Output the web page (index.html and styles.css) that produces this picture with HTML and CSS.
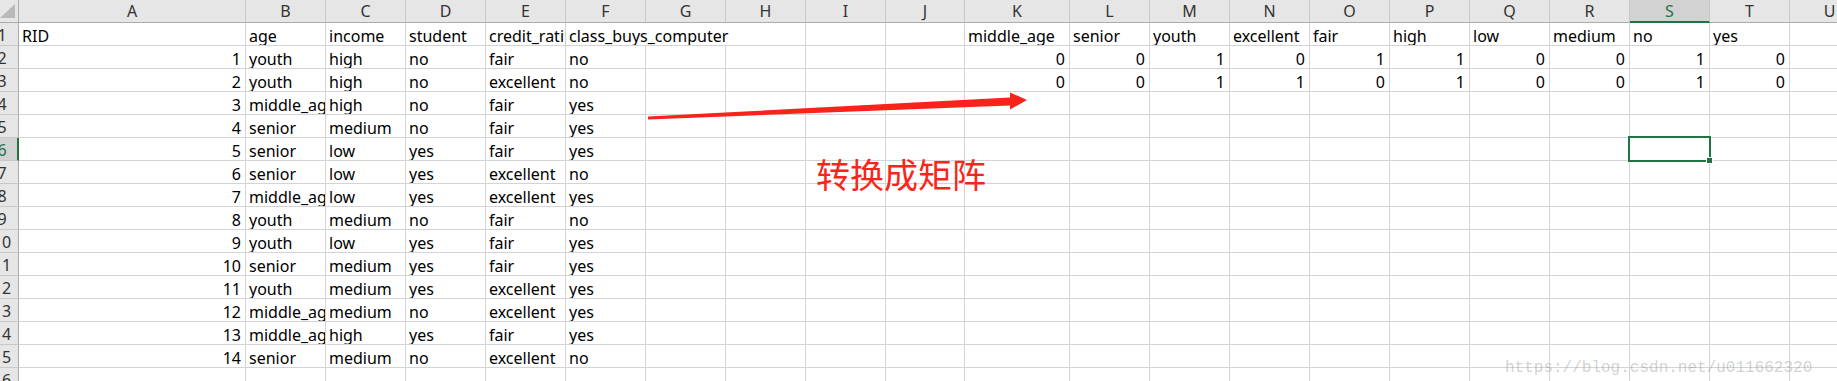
FILE: index.html
```html
<!DOCTYPE html>
<html lang="zh-CN">
<head>
  <meta charset="UTF-8" />
  <title>Sheet1</title>
  <link rel="stylesheet" href="styles.css">
</head>
<body>
  <div class="sheet" id="sheet"></div>

  <svg class="arrow" width="1837" height="381" viewBox="0 0 1837 381">
    <polygon points="648,116.6 1010,97.4 1010,92.4 1027,100 1010,109.6 1010,105.4 648,119.4" />
  </svg>
  <div class="note">转换成矩阵</div>
  <div class="mark">https://blog.csdn.net/u011662320</div>

  <script>
    const cols = 'ABCDEFGHIJKLMNOPQRSTU'.split('');
    const rows = [
      ['RID', 'age', 'income', 'student', 'credit_rating', 'class_buys_computer', '', '', '', '', 'middle_age', 'senior', 'youth', 'excellent', 'fair', 'high', 'low', 'medium', 'no', 'yes'],
      [1, 'youth', 'high', 'no', 'fair', 'no', '', '', '', '', 0, 0, 1, 0, 1, 1, 0, 0, 1, 0],
      [2, 'youth', 'high', 'no', 'excellent', 'no', '', '', '', '', 0, 0, 1, 1, 0, 1, 0, 0, 1, 0],
      [3, 'middle_age', 'high', 'no', 'fair', 'yes'],
      [4, 'senior', 'medium', 'no', 'fair', 'yes'],
      [5, 'senior', 'low', 'yes', 'fair', 'yes'],
      [6, 'senior', 'low', 'yes', 'excellent', 'no'],
      [7, 'middle_age', 'low', 'yes', 'excellent', 'yes'],
      [8, 'youth', 'medium', 'no', 'fair', 'no'],
      [9, 'youth', 'low', 'yes', 'fair', 'yes'],
      [10, 'senior', 'medium', 'yes', 'fair', 'yes'],
      [11, 'youth', 'medium', 'yes', 'excellent', 'yes'],
      [12, 'middle_age', 'medium', 'no', 'excellent', 'yes'],
      [13, 'middle_age', 'high', 'yes', 'fair', 'yes'],
      [14, 'senior', 'medium', 'no', 'excellent', 'no'],
      []
    ];
    // text that runs on into the empty cells to its right
    const spill = { '1F': 3 };
    const active = { row: 6, col: 'S' };

    const sheet = document.getElementById('sheet');
    function cell(cls, text) {
      const d = document.createElement('div');
      d.className = cls;
      d.textContent = text;
      sheet.appendChild(d);
      return d;
    }

    cell('corner', '');
    cols.forEach(c => cell('colhead' + (c === active.col ? ' active' : ''), c));

    rows.forEach((row, r) => {
      const n = r + 1;
      const head = cell('rowhead' + (n === active.row ? ' active' : ''), '');
      head.innerHTML = `<span>${n}</span>`;
      for (let i = 0; i < cols.length; i++) {
        const v = row[i] ?? '';
        const isNum = typeof v === 'number';
        const d = cell(isNum ? 'num' : 'txt', v);
        const span = spill[n + cols[i]];
        if (span) {
          d.style.gridColumn = `span ${span}`;
          i += span - 1;
        }
        if (n === active.row && cols[i] === active.col) d.classList.add('sel');
      }
    });
  </script>
</body>
</html>
```

FILE: styles.css
```css
body {
  margin: 0;
  width: 1837px;
  height: 381px;
  overflow: hidden;
  position: relative;
  background: #fff;
  font-family: 'Noto Sans', 'Noto Sans CJK SC', sans-serif;
}

.sheet {
  display: grid;
  grid-template-columns: 19px 227px repeat(8, 80px) 79px 105px repeat(10, 80px);
  grid-auto-rows: 23px;
  font-size: 16px;
  color: #000;
}
.sheet > div {
  box-sizing: border-box;
  border-right: 1px solid #d4d4d4;
  border-bottom: 1px solid #d4d4d4;
  overflow: hidden;
  white-space: nowrap;
  line-height: 26px;
  padding: 0 3px;
}
.num { text-align: right; padding-right: 4px !important; }

.colhead, .rowhead, .corner {
  background: #e6e6e6;
  color: #333;
}
.sheet > .colhead {
  text-align: center;
  line-height: 22px;
  border-right-color: #c8c8c8;
  border-bottom-color: #ababab;
}
.sheet > .rowhead {
  padding: 0;
  line-height: 24px;
  border-right-color: #ababab;
  border-bottom-color: #c8c8c8;
}
.rowhead span {
  display: block;
  width: 40px;
  margin-left: -18px;
  text-align: center;
}
.sheet > .corner {
  display: flex;
  align-items: flex-end;
  justify-content: flex-end;
  padding: 0 3px 4px 0;
  border-right-color: #ababab;
  border-bottom-color: #ababab;
}
.corner::after {
  content: '';
  width: 15px;
  height: 14px;
  background: #b9b9b9;
  clip-path: polygon(100% 0, 100% 100%, 0 100%);
}

.sheet > .colhead.active {
  background: #d2d2d2;
  color: #217346;
  border-bottom: 2px solid #217346;
}
.sheet > .rowhead.active {
  background: #d2d2d2;
  color: #217346;
  border-right: 2px solid #217346;
}

/* current cell frame with the fill handle */
.sheet > .sel {
  position: relative;
  overflow: visible;
}
.sel::before {
  content: '';
  position: absolute;
  left: -2px;
  top: -2px;
  right: -2px;
  bottom: -2px;
  border: 2px solid #217346;
  z-index: 1;
}
.sel::after {
  content: '';
  position: absolute;
  right: -4px;
  bottom: -4px;
  width: 5px;
  height: 5px;
  background: #217346;
  border: 1px solid #fff;
  z-index: 2;
}

.arrow {
  position: absolute;
  left: 0;
  top: 0;
  pointer-events: none;
}
.arrow polygon { fill: #f8231a; }

.note {
  position: absolute;
  left: 816px;
  top: 157px;
  font-family: 'Noto Sans CJK SC', sans-serif;
  font-size: 34px;
  line-height: 1;
  color: #fa241b;
}

.mark {
  position: absolute;
  left: 1505px;
  top: 360px;
  font-family: 'Liberation Mono', monospace;
  font-size: 16px;
  line-height: 1;
  color: rgba(140, 140, 140, 0.4);
}
```
